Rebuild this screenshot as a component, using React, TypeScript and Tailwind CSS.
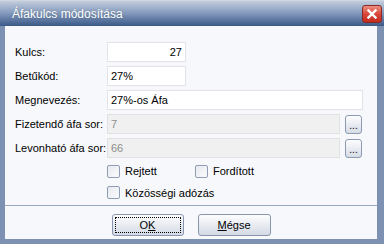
import React from 'react';

const font = { fontFamily: '"Liberation Sans", Arial, sans-serif' };

function Field({ value, disabled, right, w }: { value: string; disabled?: boolean; right?: boolean; w: string }) {
  return (
    <div
      className={`h-[20px] ${w} flex items-center px-[3px] border text-[11px] ${
        disabled ? 'bg-[#f0f0f0] border-[#e2e2e2] text-[#8d8d8d]' : 'bg-white border-[#e1e3e7] text-black'
      } ${right ? 'justify-end' : ''}`}
    >
      {value}
    </div>
  );
}

function DotsButton() {
  return (
    <div className="w-[17px] h-[19px] rounded-[3px] border border-[#8c9bb2] bg-gradient-to-b from-[#fdfdfe] to-[#d6dce6] flex items-end justify-center text-[10px] leading-[14px] text-black">
      ...
    </div>
  );
}

function Check({ label }: { label: React.ReactNode }) {
  return (
    <div className="flex items-center gap-[5px] text-[11px] text-black">
      <div className="w-[13px] h-[13px] rounded-[2px] border border-[#8e9db3] bg-gradient-to-br from-[#e6e9ee] to-[#fbfbfc]" />
      <span>{label}</span>
    </div>
  );
}

export default function App() {
  return (
    <div className="w-[384px] h-[244px] bg-[#7d91b3] flex flex-col" style={font}>
      {/* Title bar */}
      <div className="h-[26px] flex items-center justify-between pl-[12px] pr-[2px] bg-gradient-to-b from-[#c3cddd] via-[#8299bb] to-[#3a5888] border-t border-[#d0d6e0]">
        <span className="text-white text-[12px] leading-none" style={{ textShadow: '0 0 2px rgba(0,0,0,0.25)' }}>
          Áfakulcs módosítása
        </span>
        <div className="w-[20px] h-[18px] rounded-[3px] border border-[#8a2a22] bg-gradient-to-b from-[#eb8d81] via-[#d9473a] to-[#c22a1c] flex items-center justify-center">
          <svg width="10" height="10" viewBox="0 0 10 10">
            <path d="M1.5 1.5 L8.5 8.5 M8.5 1.5 L1.5 8.5" stroke="white" strokeWidth="2.4" strokeLinecap="square" />
          </svg>
        </div>
      </div>

      {/* Client area */}
      <div className="flex-1 ml-[5px] mr-[7px] mb-[5px] bg-[#f7f8fb] flex flex-col">
        <div className="pl-[10px] pt-[16px] flex flex-col gap-[4px] text-[11px] text-black">
          <div className="flex items-center">
            <span className="w-[92px]">Kulcs:</span>
            <Field value="27" right w="w-[79px]" />
          </div>
          <div className="flex items-center">
            <span className="w-[92px]">Betűkód:</span>
            <Field value="27%" w="w-[79px]" />
          </div>
          <div className="flex items-center">
            <span className="w-[92px]">Megnevezés:</span>
            <Field value="27%-os Áfa" w="w-[256px]" />
          </div>
          <div className="flex items-center">
            <span className="w-[92px]">Fizetendő áfa sor:</span>
            <Field value="7" disabled w="w-[233px]" />
            <div className="ml-[5px]">
              <DotsButton />
            </div>
          </div>
          <div className="flex items-center">
            <span className="w-[92px]">Levonható áfa sor:</span>
            <Field value="66" disabled w="w-[233px]" />
            <div className="ml-[5px]">
              <DotsButton />
            </div>
          </div>
        </div>

        <div className="pl-[102px] pt-[5px] flex flex-col gap-[5px]">
          <div className="flex">
            <div className="w-[88px]">
              <Check label="Rejtett" />
            </div>
            <Check label="Fordított" />
          </div>
          <Check label="Közösségi adózás" />
        </div>

        <div className="mt-[4px] border-t border-[#9aa9c0]" />

        <div className="flex justify-center gap-[14px] pt-[8px]">
          <div className="w-[72px] h-[22px] rounded-[3px] border border-[#8796ad] bg-gradient-to-b from-[#fdfdfe] to-[#d3dae5] p-[2px]">
            <div className="w-full h-full border border-dotted border-black flex items-center justify-center text-[11px] text-black">
              <span>
                O<span className="underline">K</span>
              </span>
            </div>
          </div>
          <div className="w-[73px] h-[22px] rounded-[3px] border border-[#8796ad] bg-gradient-to-b from-[#fdfdfe] to-[#d3dae5] flex items-center justify-center text-[11px] text-black">
            <span>
              <span className="underline">M</span>égse
            </span>
          </div>
        </div>
      </div>
    </div>
  );
}
